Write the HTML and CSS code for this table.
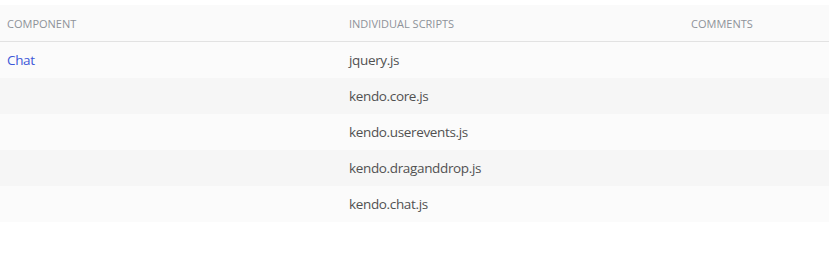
FILE: index.html
```html
<!DOCTYPE html>
<html>
<head>
<meta charset="utf-8">
<link rel="stylesheet" href="styles.css">
</head>
<body>
<div class="table">
  <div class="row head">
    <div class="cell">Component</div>
    <div class="cell">Individual Scripts</div>
    <div class="cell">Comments</div>
  </div>
  <div class="row odd">
    <div class="cell"><a class="link" href="#">Chat</a></div>
    <div class="cell">jquery.js</div>
    <div class="cell"></div>
  </div>
  <div class="row even">
    <div class="cell"></div>
    <div class="cell">kendo.core.js</div>
    <div class="cell"></div>
  </div>
  <div class="row odd">
    <div class="cell"></div>
    <div class="cell">kendo.userevents.js</div>
    <div class="cell"></div>
  </div>
  <div class="row even">
    <div class="cell"></div>
    <div class="cell">kendo.draganddrop.js</div>
    <div class="cell"></div>
  </div>
  <div class="row odd">
    <div class="cell"></div>
    <div class="cell">kendo.chat.js</div>
    <div class="cell"></div>
  </div>
</div>
</body>
</html>
```
FILE: styles.css
```css
html, body {
  margin: 0;
  padding: 0;
  background: #ffffff;
}
body {
  padding-top: 5px;
  font-family: "Open Sans", "Liberation Sans", sans-serif;
  color: #515151;
}
.table {
  display: flex;
  flex-direction: column;
}
.row {
  display: grid;
  grid-template-columns: 342px 342px 1fr;
  height: 36px;
  align-items: center;
}
.cell {
  padding-left: 7px;
  font-size: 13.5px;
  letter-spacing: -0.35px;
}
.head {
  background: #fafafa;
  border-bottom: 1px solid #e2e2e2;
}
.head .cell {
  font-size: 11px;
  text-transform: uppercase;
  color: #8e9299;
  letter-spacing: 0;
}
.odd { background: #fbfbfb; }
.even { background: #f6f6f6; }
.link {
  color: #3d57d8;
  text-decoration: none;
}
```
